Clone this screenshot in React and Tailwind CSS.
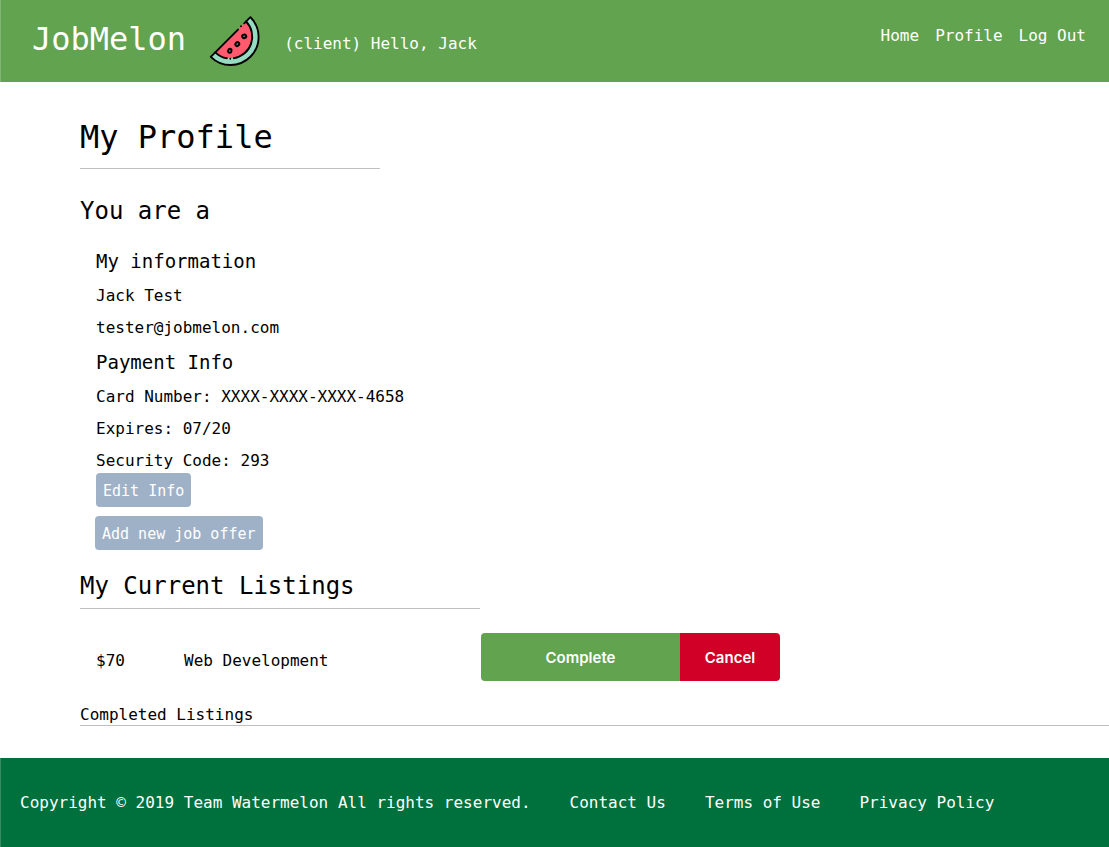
const navLinks = ["Home", "Profile", "Log Out"];
const footerLinks = ["Contact Us", "Terms of Use", "Privacy Policy"];
const listings = [{ price: "$70", title: "Web Development" }];

function Watermelon() {
  return (
    <svg
      className="h-[50px] w-[50px] shrink-0 overflow-visible"
      viewBox="0 0 50 50"
      fill="none"
      stroke="#000"
      strokeWidth="1.9"
      strokeLinecap="round"
      strokeLinejoin="round"
      role="img"
      aria-label="Watermelon slice"
    >
      <path d="M40.4 1.2A28 28 0 0 1 .8 40.8L5.3 36.3A21.8 21.8 0 0 0 36.1 5.5Z" fill="#96dcc3" stroke="none" />
      <path d="M36.1 5.5A21.8 21.8 0 0 1 5.3 36.3Z" fill="#ff5a6e" stroke="none" />
      <path d="M28 13.6L.8 40.8A28 28 0 0 0 40.4 1.2L34.2 7.4" />
      <path d="M31 10.2h.01" />
      <path d="M36.1 5.5A21.8 21.8 0 0 1 23.8 42.2M20.3 42.7h.01M16.8 42.3A21.8 21.8 0 0 1 5.3 36.3" />
      <g fill="#73706f" strokeWidth="1.9">
        <ellipse cx="19.8" cy="34.8" rx="1.7" ry="2.1" transform="rotate(10 19.8 34.8)" />
        <ellipse cx="27.3" cy="28.1" rx="1.8" ry="2.1" transform="rotate(45 27.3 28.1)" />
        <ellipse cx="34.2" cy="20.3" rx="1.8" ry="2.1" transform="rotate(75 34.2 20.3)" />
      </g>
    </svg>
  );
}

export default function App() {
  return (
    <div className="flex min-h-screen flex-col bg-white font-['DejaVu_Sans_Mono','Liberation_Mono',monospace] text-base text-black">
      <header className="flex items-start border-l border-[#82b474] bg-[#62a350] py-4 pr-[23px] pl-[31px] text-white">
        <div className="text-[32px] leading-[46px]">JobMelon</div>
        <div className="ml-6">
          <Watermelon />
        </div>
        <p className="-mb-2 ml-6 leading-[56px]">(client) Hello, Jack</p>
        <nav className="ml-auto flex gap-4 leading-[40px]">
          {navLinks.map((label) => (
            <a key={label} href="#">
              {label}
            </a>
          ))}
        </nav>
      </header>

      <main className="flex grow flex-col items-start pt-8 pb-8 pl-20">
        <h1 className="w-[300px] border-b border-[#c0c0c0] pb-2 text-[32px] leading-[46px]">My Profile</h1>
        <h2 className="mt-6 text-2xl leading-9">You are a</h2>

        <section className="mt-[18px] flex flex-col items-start gap-2 pl-4 leading-6">
          <h3 className="text-[19px] leading-[29px]">My information</h3>
          <p>Jack Test</p>
          <p>tester@jobmelon.com</p>
          <h3 className="text-[19px] leading-[29px]">Payment Info</h3>
          <p>Card Number: XXXX-XXXX-XXXX-4658</p>
          <p>Expires: 07/20</p>
          <p>Security Code: 293</p>
        </section>
        <button className="ml-4 h-[34px] rounded bg-[#9fb1c6] px-[7px] pt-0.5 text-[15px] text-white">
          Edit Info
        </button>
        <button className="mt-[9px] ml-[15px] h-[34px] rounded bg-[#9fb1c6] px-[7px] pt-0.5 text-[15px] text-white">
          Add new job offer
        </button>

        <h2 className="mt-[19px] w-[400px] border-b border-[#c0c0c0] pb-[5px] text-2xl leading-[34px]">
          My Current Listings
        </h2>
        <ul className="mt-6">
          {listings.map(({ price, title }) => (
            <li key={title} className="flex items-center pl-4">
              <span className="w-[88px] pt-2">{price}</span>
              <span className="w-[297px] pt-2">{title}</span>
              <div className="flex h-12 overflow-hidden rounded font-['Inter',sans-serif] text-[15px] font-semibold text-white">
                <button className="w-[199px] bg-[#62a350] pt-0.5">Complete</button>
                <button className="w-[100px] bg-[#d00026] pt-0.5">Cancel</button>
              </div>
            </li>
          ))}
        </ul>
        <h4 className="mt-6 self-stretch border-b border-[#c0c0c0] leading-5">Completed Listings</h4>
      </main>

      <footer className="flex flex-wrap gap-x-[39px] border-l border-[#338c62] bg-[#00703c] py-8 pl-[19px] leading-[25px] text-white">
        <p>Copyright © 2019 Team Watermelon All rights reserved.</p>
        {footerLinks.map((label) => (
          <a key={label} href="#">
            {label}
          </a>
        ))}
      </footer>
    </div>
  );
}
